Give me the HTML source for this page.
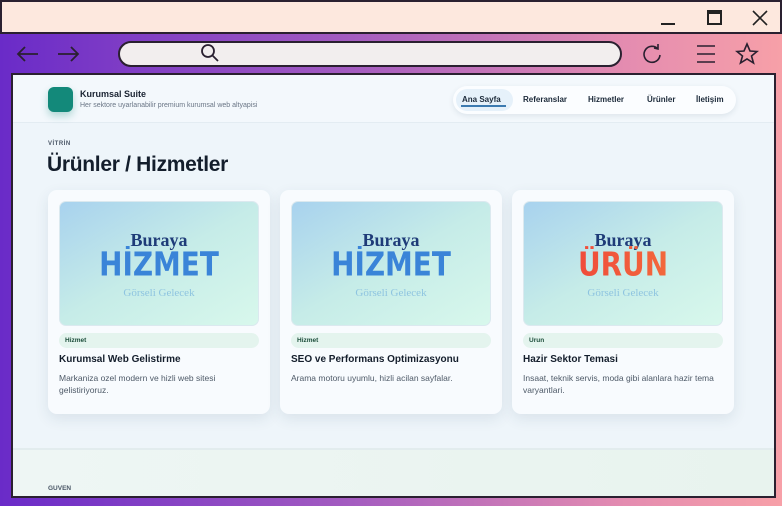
<!DOCTYPE html>
<html><head><meta charset="utf-8"><style>
*{margin:0;padding:0;box-sizing:border-box}
body{width:782px;height:506px;overflow:hidden;font-family:"Liberation Sans",sans-serif;background:linear-gradient(90deg,#6a2bc8 0%,#a45cc0 45%,#e48cb0 80%,#f7a0a8 100%);position:relative}
.title{position:absolute;left:0;top:0;width:782px;height:34px;background:#fde8de;border:2px solid #2a2030;border-bottom:2px solid #2a2030}
.ic{position:absolute}
.url{position:absolute;left:118px;top:41px;width:504px;height:26px;border:2px solid #2a2030;border-radius:13px;background:#f2eeee}
.content{position:absolute;left:11px;top:73px;width:765px;height:425px;border:2px solid #2a2030;border-top:2px solid #2a2030;background:#eef5fa;overflow:hidden}
.hdr{position:absolute;left:0;top:0;width:100%;height:48px;background:#f3f8fc;border-bottom:1px solid #e3ecf2}
.logo{position:absolute;left:35px;top:12px;width:25px;height:25px;border-radius:6px;background:#13897a;box-shadow:0 4px 8px rgba(19,137,122,.3)}
.bn{position:absolute;left:67px;top:14px;font-size:9px;font-weight:bold;color:#1a2332}
.bs{position:absolute;left:67px;top:27px;font-size:7px;color:#6a7686}
.nav{position:absolute;left:440px;top:11px;width:283px;height:28px;border-radius:14px;background:#fbfdff;box-shadow:0 2px 6px rgba(30,60,90,.1);font-size:8px;font-weight:bold;color:#1c2a3a}
.nav span{position:absolute;top:9px}
.act{position:absolute;left:3px;top:3px;width:57px;height:22px;border-radius:11px;background:#e6f1fa}
.k{position:absolute;left:35px;top:66px;font-size:6px;font-weight:bold;color:#4a5666;letter-spacing:.5px}
.h{position:absolute;left:34px;top:78px;font-size:21px;font-weight:bold;color:#141e2c;letter-spacing:-.3px}
.card{position:absolute;top:115px;width:222px;height:224px;background:#f8fbfe;border-radius:9px;box-shadow:0 5px 14px rgba(40,70,100,.1)}
.img{position:absolute;left:11px;top:11px;width:200px;height:125px;border-radius:7px;background:linear-gradient(150deg,#a8d2ee 0%,#c6ece8 50%,#d8f8ec 100%);border:1px solid #dbe9ef;text-align:center}
.b1{position:absolute;left:0;width:100%;top:28px;font-family:"Liberation Serif",serif;font-weight:bold;font-size:18px;color:#1e3b78}
.b2{position:absolute;left:0;width:100%;top:45px;font-family:"DejaVu Sans Condensed","Liberation Sans",sans-serif;font-weight:bold;font-size:31px;color:#3a84d8;transform:scaleY(1.05);letter-spacing:0}
.b2.o{background:linear-gradient(90deg,#ee3a3a,#f47a3c);-webkit-background-clip:text;color:transparent}
.b3{position:absolute;left:0;width:100%;top:85px;font-family:"Liberation Serif",serif;font-size:11px;color:#8ec4e0}
.tag{position:absolute;left:11px;top:143px;width:200px;height:15px;border-radius:8px;background:#e4f4ee;font-size:6.5px;font-weight:bold;color:#1b4d3a;padding:4px 0 0 6px}
.ct{position:absolute;left:11px;top:164px;font-size:10px;font-weight:bold;color:#141e2c}
.cd{position:absolute;left:11px;top:182px;width:195px;font-size:8.5px;line-height:12px;color:#4e5a68}
.sec2{position:absolute;left:0;top:373px;width:100%;height:60px;background:linear-gradient(90deg,#eef6f4,#e8f3ee);border-top:2px solid #e2ecee}
</style></head><body>
<div class="title"></div>
<div class="ic" style="left:661px;top:23px;width:14px;height:2px;background:#222"></div>
<div class="ic" style="left:707px;top:10px;width:15px;height:15px;border:2px solid #222;border-top:4px solid #222"></div>
<svg class="ic" style="left:752px;top:10px" width="16" height="16"><path d="M1 1L15 15M15 1L1 15" stroke="#222" stroke-width="1.6"/></svg>
<svg class="ic" style="left:16px;top:45px" width="70" height="20" fill="none" stroke="#2a2030" stroke-width="1.8"><path d="M22 9H2M9 2L2 9L9 16"/><path d="M42 9H62M55 2L62 9L55 16"/></svg>
<div class="url"></div>
<svg class="ic" style="left:200px;top:43px" width="20" height="20" fill="none" stroke="#2a2030" stroke-width="1.8"><circle cx="8" cy="8" r="6"/><path d="M12 12L18 18"/></svg>
<svg class="ic" style="left:640px;top:42px" width="24" height="24" fill="none" stroke="#2a2030" stroke-width="1.6"><path d="M18 7A8 8 0 1 0 20 13"/><path d="M14 6L18 7L18 2"/></svg>
<svg class="ic" style="left:695px;top:43px" width="22" height="22" stroke="#2a2030" stroke-width="1.6"><path d="M2 3H20M2 11H20M2 19H20"/></svg>
<svg class="ic" style="left:735px;top:42px" width="24" height="24" fill="none" stroke="#2a2030" stroke-width="1.6"><path d="M12 2L15 9L22 9.5L16.5 14L18.5 21L12 17L5.5 21L7.5 14L2 9.5L9 9Z"/></svg>
<div class="content">
<div class="hdr">
<div class="logo"></div><div class="bn">Kurumsal Suite</div><div class="bs">Her sektore uyarlanabilir premium kurumsal web altyapisi</div>
<div class="nav"><div class="act"></div><div style="position:absolute;left:8px;top:19px;width:45px;height:1.5px;background:#3c7ab0"></div>
<span style="left:9px">Ana Sayfa</span><span style="left:70px">Referanslar</span><span style="left:135px">Hizmetler</span><span style="left:194px">Ürünler</span><span style="left:243px">İletişim</span></div>
</div>
<div class="k">VİTRİN</div>
<div class="h">Ürünler / Hizmetler</div>
<div class="card" style="left:35px"><div class="img"><div class="b1">Buraya</div><div class="b2">HİZMET</div><div class="b3">Görseli Gelecek</div></div><div class="tag">Hizmet</div><div class="ct">Kurumsal Web Gelistirme</div><div class="cd">Markaniza ozel modern ve hizli web sitesi gelistiriyoruz.</div></div>
<div class="card" style="left:267px"><div class="img"><div class="b1">Buraya</div><div class="b2">HİZMET</div><div class="b3">Görseli Gelecek</div></div><div class="tag">Hizmet</div><div class="ct">SEO ve Performans Optimizasyonu</div><div class="cd">Arama motoru uyumlu, hizli acilan sayfalar.</div></div>
<div class="card" style="left:499px"><div class="img"><div class="b1">Buraya</div><div class="b2 o">ÜRÜN</div><div class="b3">Görseli Gelecek</div></div><div class="tag">Urun</div><div class="ct">Hazir Sektor Temasi</div><div class="cd">Insaat, teknik servis, moda gibi alanlara hazir tema varyantlari.</div></div>
<div class="sec2"><div style="position:absolute;left:35px;top:35px;font-size:6.5px;font-weight:bold;color:#4a5666">GUVEN</div><div style="position:absolute;left:34px;top:46px;font-size:21px;font-weight:bold;color:#141e2c">Referanslar</div></div>
</div>
</body></html>
